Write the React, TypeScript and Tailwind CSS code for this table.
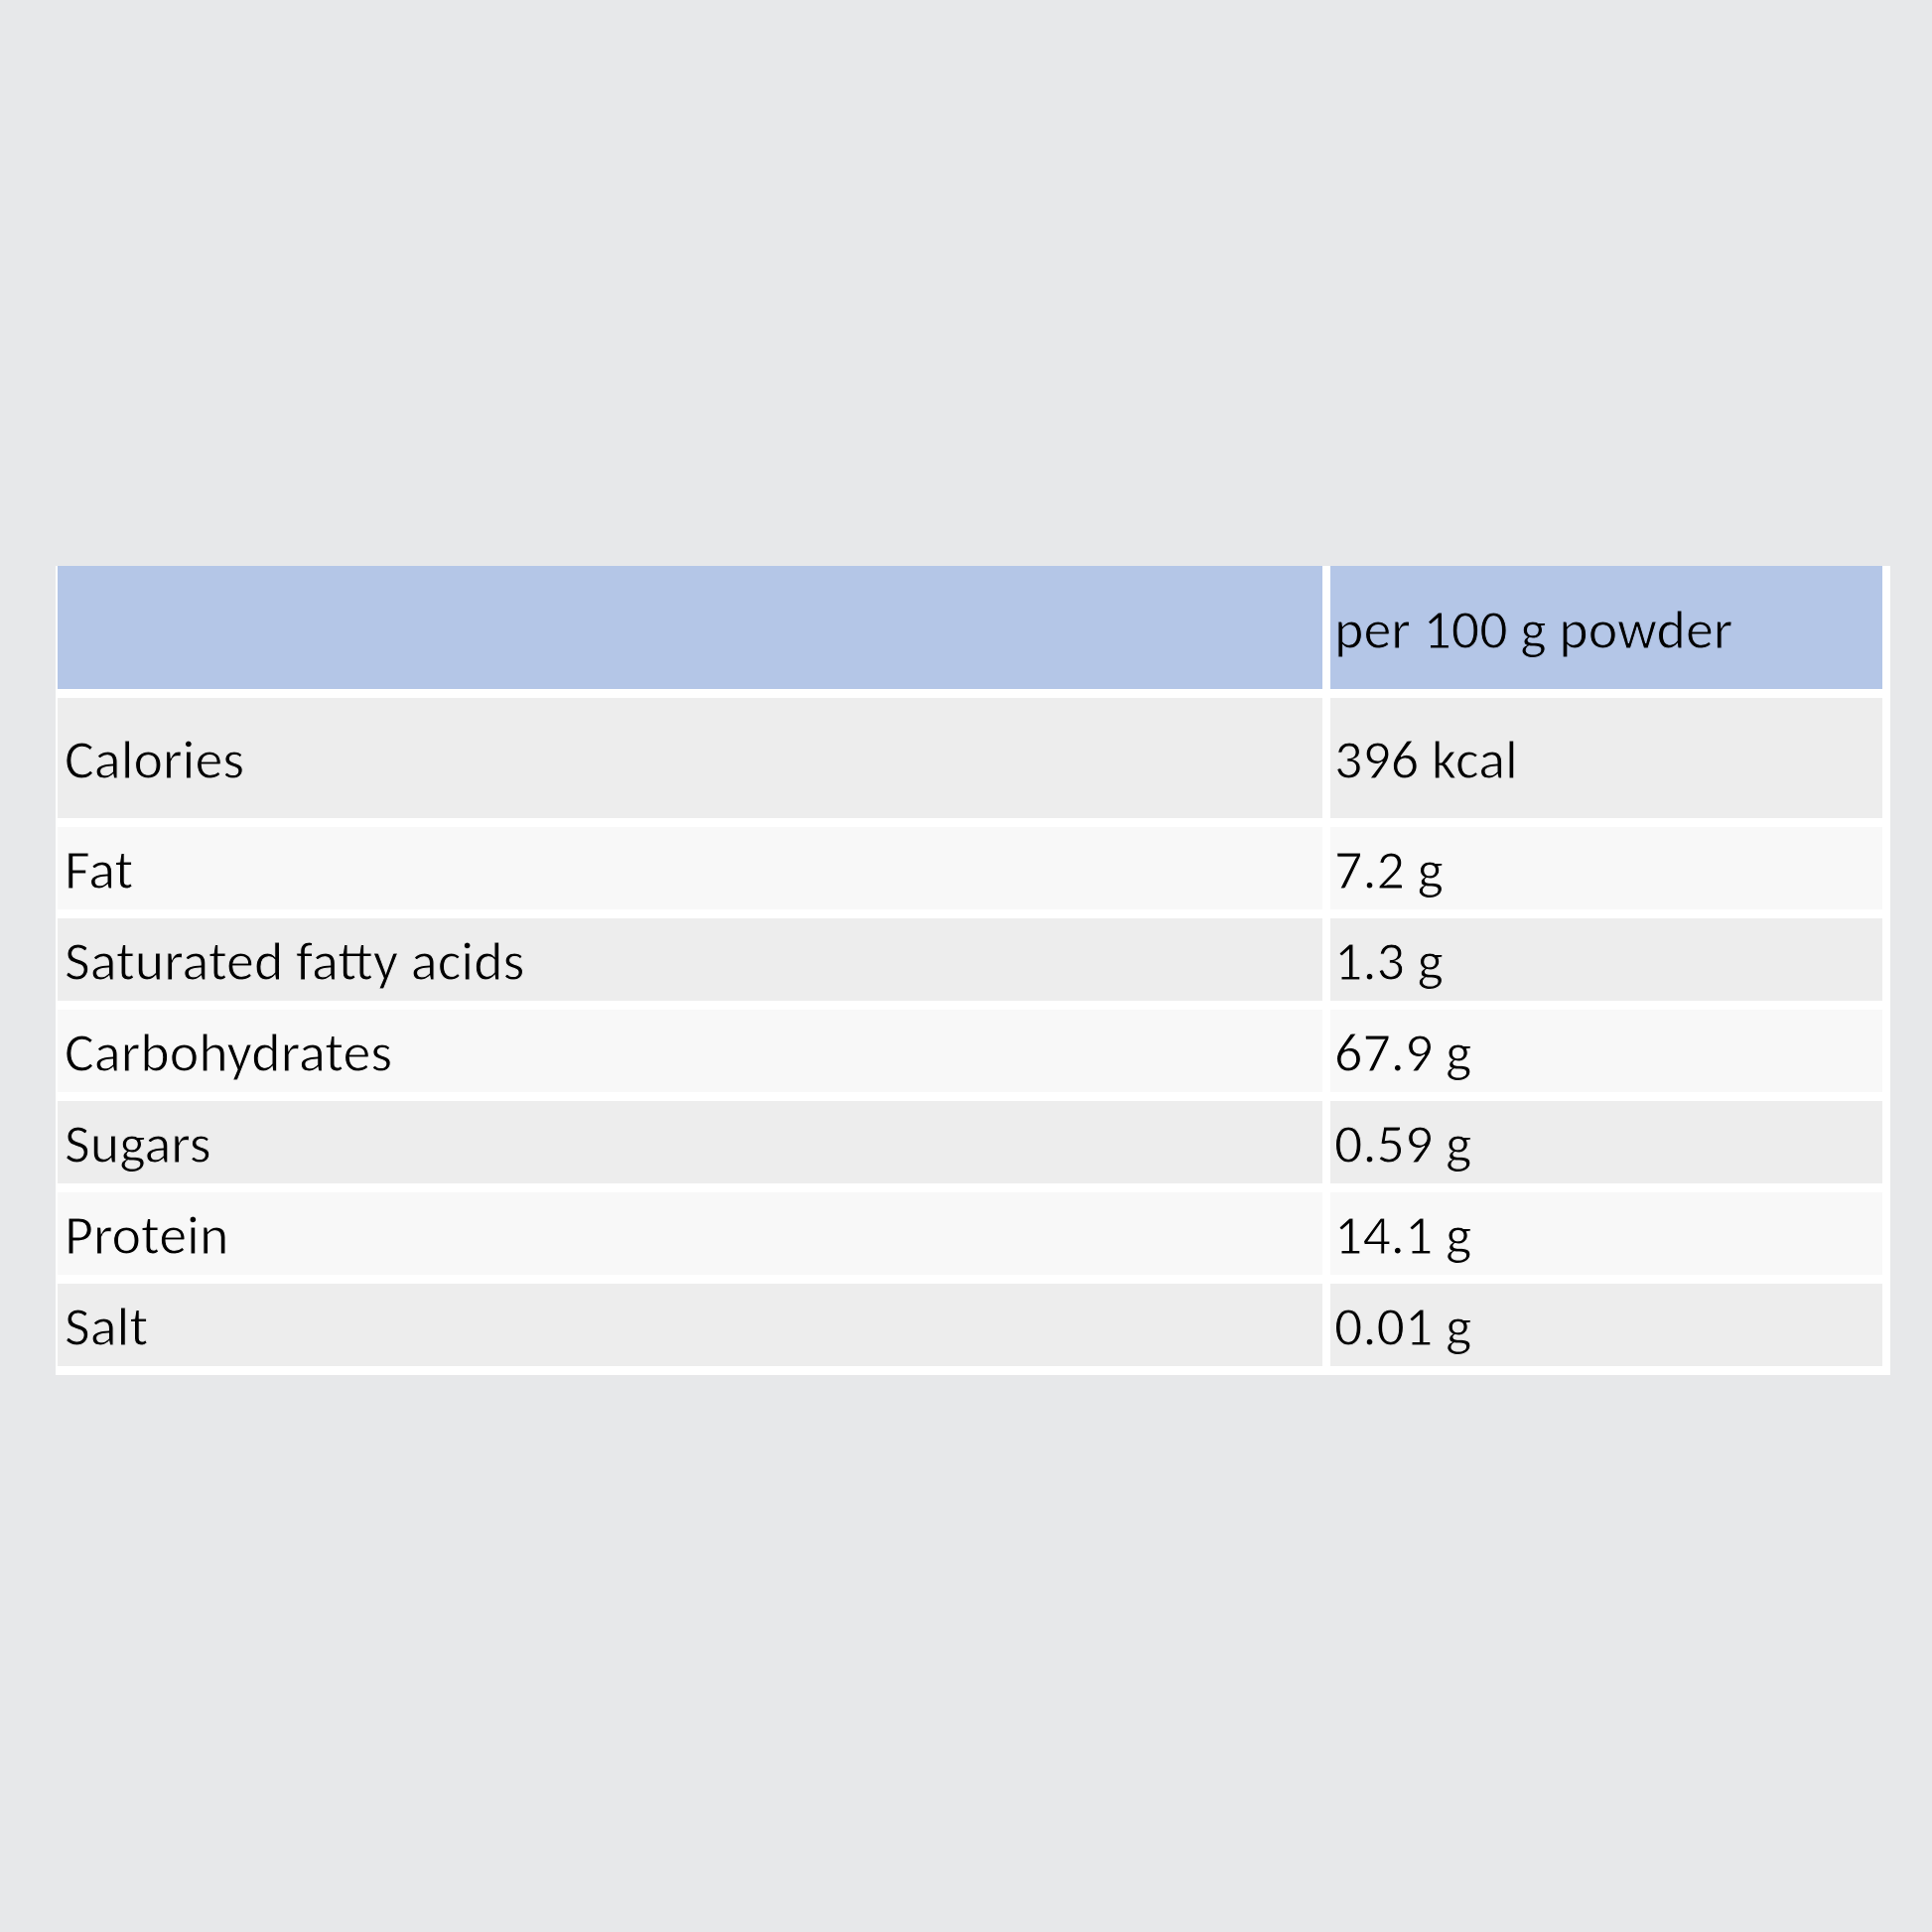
const rows = [
  { label: "Calories", value: "396 kcal", tall: true },
  { label: "Fat", value: "7.2 g" },
  { label: "Saturated fatty acids", value: "1.3 g" },
  { label: "Carbohydrates", value: "67.9 g" },
  { label: "Sugars", value: "0.59 g" },
  { label: "Protein", value: "14.1 g" },
  { label: "Salt", value: "0.01 g" },
];

export default function App() {
  return (
    <div className="min-h-screen bg-[#e7e8ea] pl-[56px] pt-[570px] font-['Carlito','Liberation_Sans',sans-serif] text-[56px] leading-none text-black">
      <div className="grid w-max grid-cols-[1274px_556px] gap-x-[8px] gap-y-[9px] bg-white pb-[9px] pl-[2px] pr-[8px]">
        <div className="h-[124px] bg-[#b4c6e7]" />
        <div className="flex h-[124px] items-center bg-[#b4c6e7] pl-[4px] pt-[4px] [-webkit-text-stroke:1px_#b4c6e7]">
          per 100 g powder
        </div>
        {rows.map((r, i) => {
          const even = i % 2 === 0;
          const cell =
            (r.tall ? "h-[121px] " : "h-[83px] ") +
            (even
              ? "bg-[#ededed] [-webkit-text-stroke:1px_#ededed] "
              : "bg-[#f8f8f8] [-webkit-text-stroke:1px_#f8f8f8] ") +
            "flex items-center pt-[2px]";
          return (
            <div key={r.label} className="contents">
              <div className={cell + " pl-[7px]"}>{r.label}</div>
              <div className={cell + " pl-[4px]"}>{r.value}</div>
            </div>
          );
        })}
      </div>
    </div>
  );
}
